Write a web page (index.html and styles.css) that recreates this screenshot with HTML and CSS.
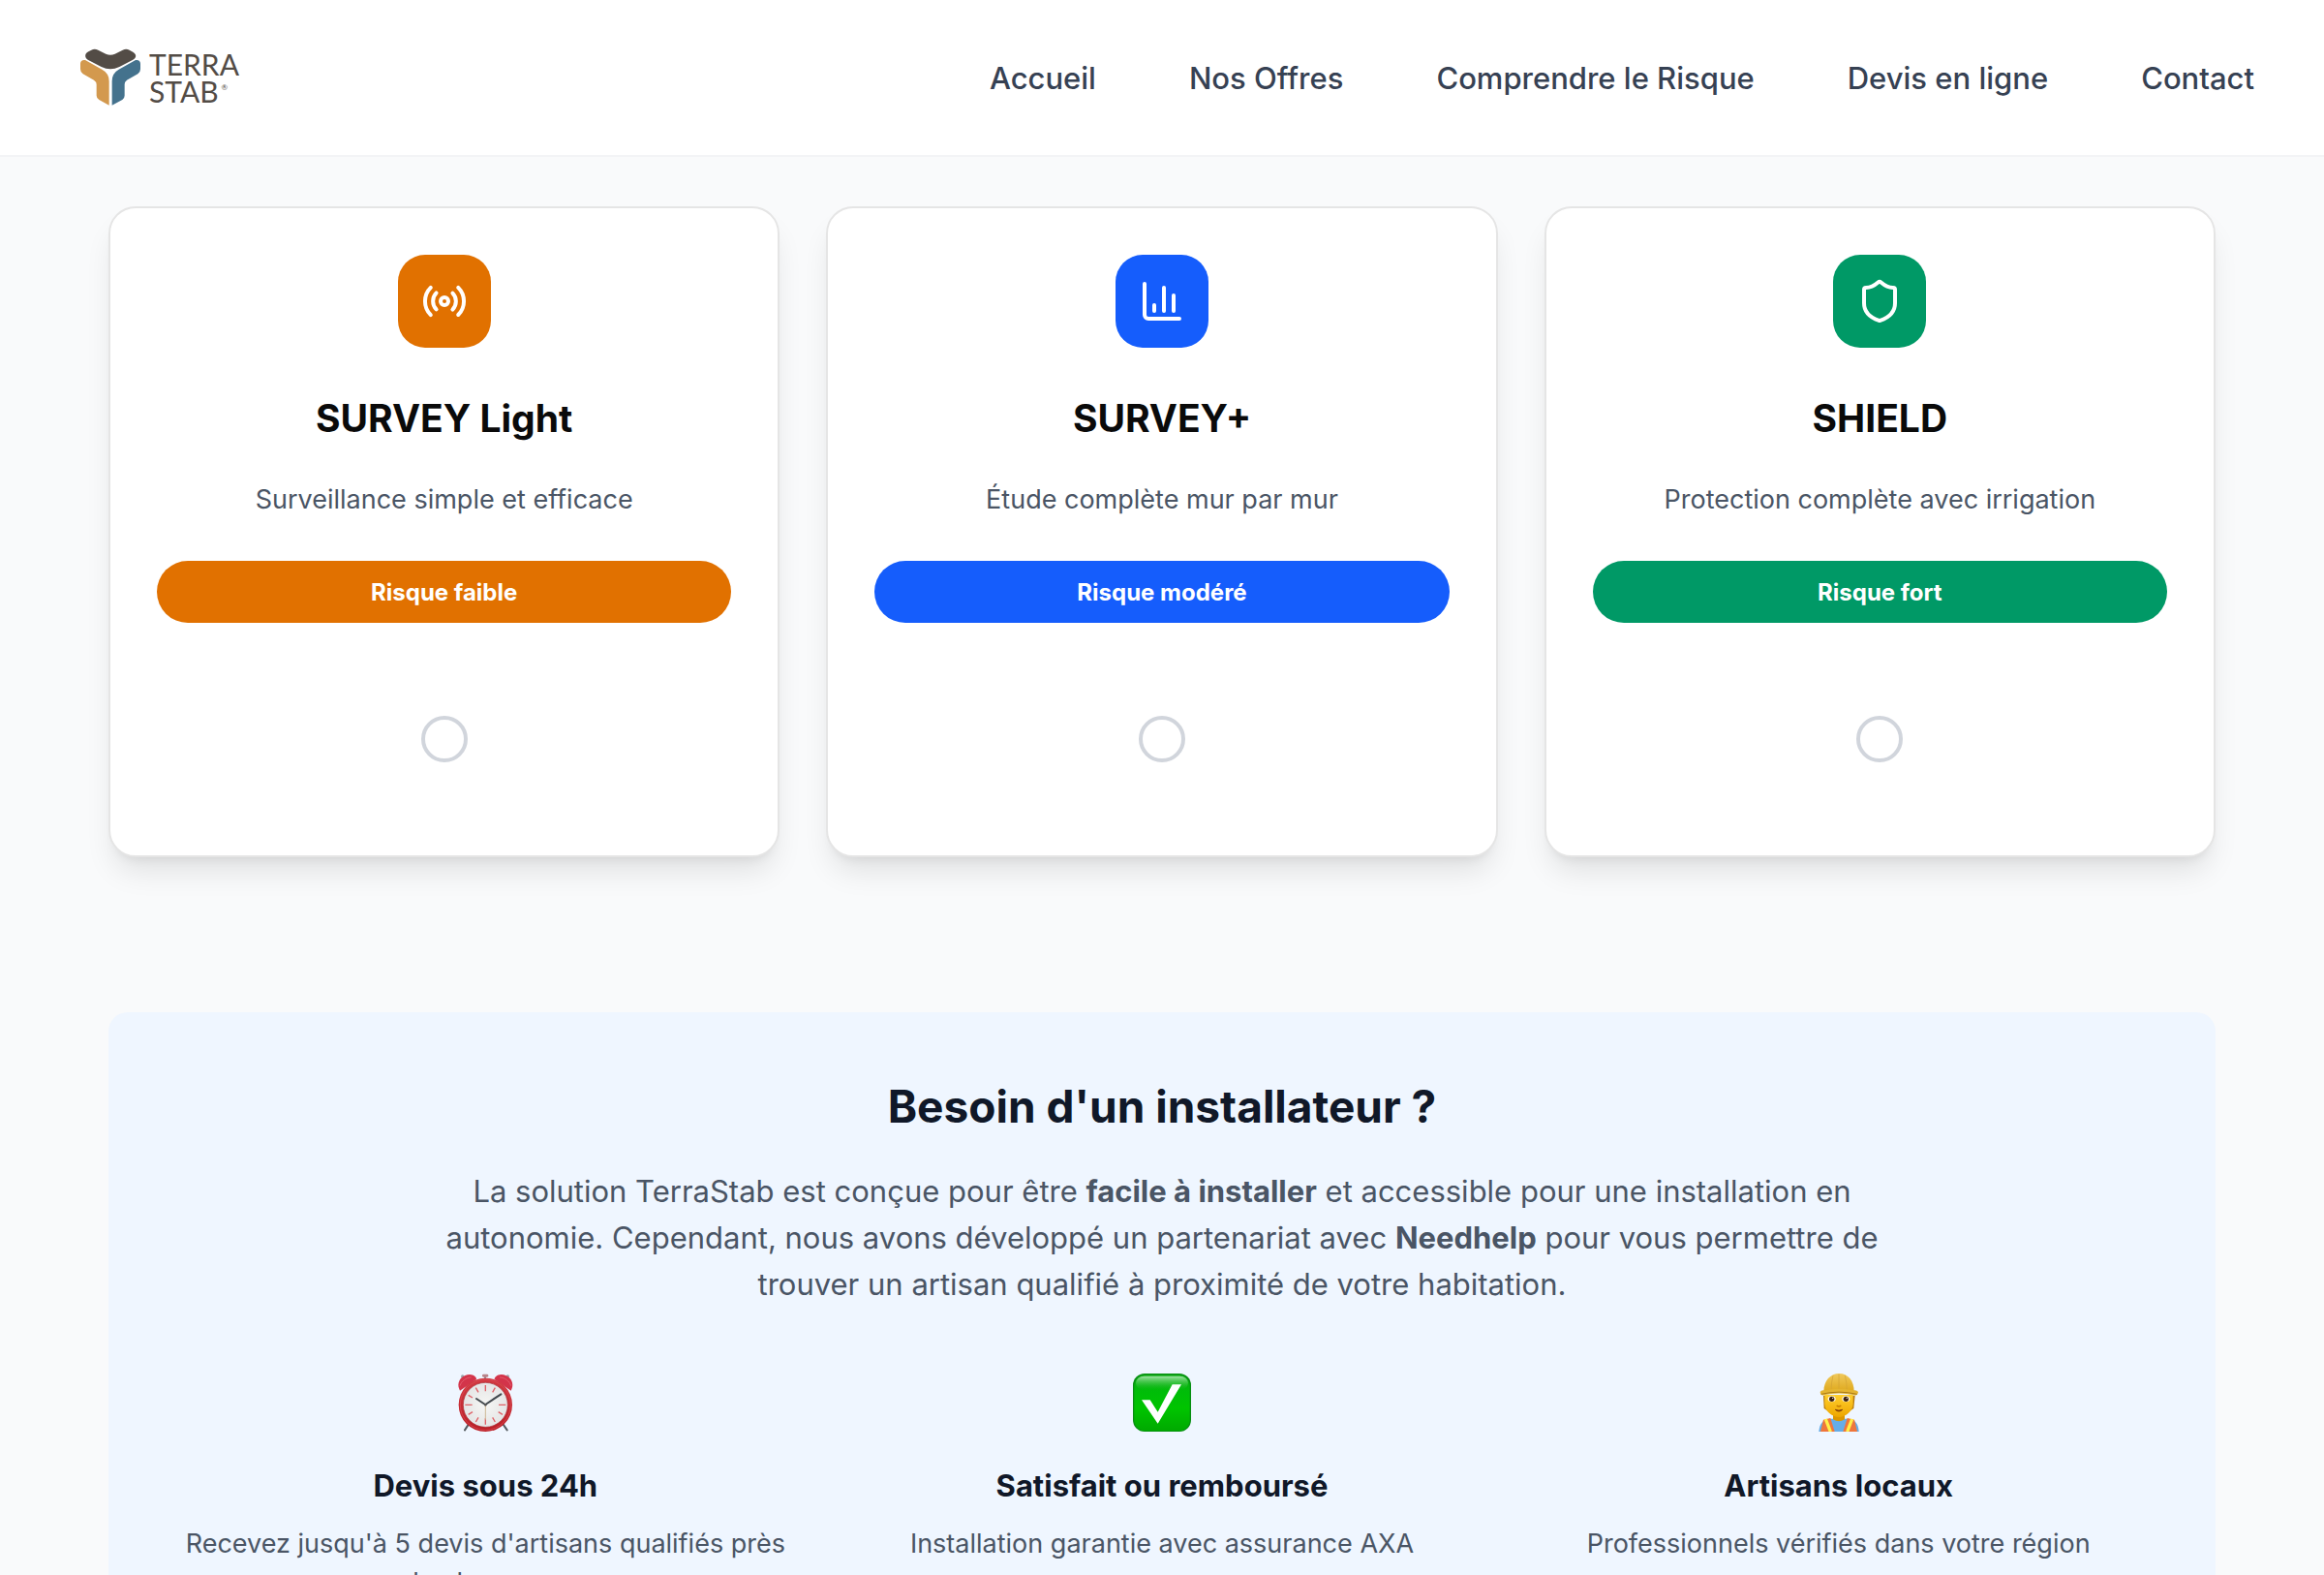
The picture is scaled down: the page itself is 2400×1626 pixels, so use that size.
FILE: index.html
```html
<!DOCTYPE html>
<html lang="fr">
<head>
<meta charset="utf-8">
<meta name="viewport" content="width=device-width, initial-scale=1">
<title>TerraStab – Nos Offres</title>
<link rel="stylesheet" href="styles.css">
</head>
<body>
<header class="site-header">
  <a class="logo" href="#">
    <svg class="logo-mark" viewBox="66 60 192 183" aria-hidden="true">
      <path fill="#534c46" d="M85 87C83 79 87 74 94 70L103 65Q113 60 124 65L148 77Q162 83 176 77L200 65Q211 60 221 65L232 71Q243 78 240 87Q238 92 232 95L190 117Q162 131 134 117L92 95Q87 92 85 87Z"/>
      <path fill="#d3994e" d="M69 107Q70 94 84 96L136 125Q158 137 158 161V236L127 219Q119 214 119 206V172Q119 163 111 158L77 139Q69 134 69 124Z"/>
      <path fill="#44728d" d="M255 107Q254 94 240 96L188 125Q167 137 167 161V236L199 219Q206 214 206 206V172Q206 163 213 158L247 139Q255 134 255 124Z"/>
    </svg>
    <span class="logo-text">TERRA<br>STAB<sup class="logo-reg">®</sup></span>
  </a>
  <nav class="nav">
    <a href="#">Accueil</a>
    <a href="#">Nos Offres</a>
    <a href="#">Comprendre le Risque</a>
    <a href="#">Devis en ligne</a>
    <a href="#">Contact</a>
  </nav>
</header>

<main class="main">
  <div class="offers">
    <article class="card card-light">
      <span class="card-icon">
        <svg class="icon" viewBox="0 0 24 24" aria-hidden="true"><path d="M4.9 19.1C1 15.2 1 8.8 4.9 4.9"/><path d="M7.8 16.2c-2.3-2.3-2.3-6.1 0-8.5"/><circle cx="12" cy="12" r="2"/><path d="M16.2 7.8c2.3 2.3 2.3 6.1 0 8.5"/><path d="M19.1 4.9C23 8.8 23 15.1 19.1 19"/></svg>
      </span>
      <h3 class="card-title" id="offer-light">SURVEY Light</h3>
      <p class="card-desc">Surveillance simple et efficace</p>
      <span class="badge">Risque faible</span>
      <input class="card-radio" type="radio" name="offer" aria-labelledby="offer-light">
    </article>
    <article class="card card-plus">
      <span class="card-icon">
        <svg class="icon" viewBox="0 0 24 24" aria-hidden="true"><path d="M3 3v16a2 2 0 0 0 2 2h16"/><path d="M18 17V9"/><path d="M13 17V5"/><path d="M8 17v-3"/></svg>
      </span>
      <h3 class="card-title" id="offer-plus">SURVEY+</h3>
      <p class="card-desc">Étude complète mur par mur</p>
      <span class="badge">Risque modéré</span>
      <input class="card-radio" type="radio" name="offer" aria-labelledby="offer-plus">
    </article>
    <article class="card card-shield">
      <span class="card-icon">
        <svg class="icon" viewBox="0 0 24 24" aria-hidden="true"><path d="M20 13c0 5-3.5 7.5-7.66 8.95a1 1 0 0 1-.67-.01C7.5 20.5 4 18 4 13V6a1 1 0 0 1 1-1c2 0 4.500-1.200 6.240-2.720a1.170 1.170 0 0 1 1.520 0C14.510 3.810 17 5 19 5a1 1 0 0 1 1 1z"/></svg>
      </span>
      <h3 class="card-title" id="offer-shield">SHIELD</h3>
      <p class="card-desc">Protection complète avec irrigation</p>
      <span class="badge">Risque fort</span>
      <input class="card-radio" type="radio" name="offer" aria-labelledby="offer-shield">
    </article>
  </div>

  <section class="installer">
    <h2 class="installer-title">Besoin d'un installateur ?</h2>
    <p class="installer-intro">La solution TerraStab est conçue pour être <strong>facile à installer</strong> et accessible pour une installation en autonomie. Cependant, nous avons développé un partenariat avec <strong>Needhelp</strong> pour vous permettre de trouver un artisan qualifié à proximité de votre habitation.</p>
    <div class="perks">
      <div class="perk">
        <svg class="perk-icon" viewBox="0 0 180 180" aria-hidden="true">
          <defs>
            <linearGradient id="rim" x1="0" y1="0" x2="0" y2="1"><stop offset="0" stop-color="#d23a42"/><stop offset="1" stop-color="#bb1f27"/></linearGradient>
            <radialGradient id="face"><stop offset="0" stop-color="#f6f6f4"/><stop offset="1" stop-color="#e5e6e6"/></radialGradient>
          </defs>
          <path d="M44 149L27 175M140 149L158 175" stroke="#555c62" stroke-width="6" stroke-linecap="round"/>
          <circle cx="20" cy="9" r="5" fill="#9aa5ab"/><circle cx="160" cy="9" r="5" fill="#9aa5ab"/>
          <path d="M90 7V22" stroke="#8a8f94" stroke-width="6"/>
          <rect x="81" y="2" width="19" height="9" rx="4" fill="#b9848a"/>
          <path d="M12 53C-2 28 16 4 42 3C56 3 64 13 63 18Z" fill="#d3344a"/>
          <path d="M170 53C184 28 166 4 140 3C126 3 118 13 119 18Z" fill="#d3344a"/>
          <path d="M12 38C16 24 31 12 47 12" fill="none" stroke="#e25a6c" stroke-width="3"/>
          <path d="M170 38C166 24 151 12 135 12" fill="none" stroke="#e25a6c" stroke-width="3"/>
          <circle cx="91" cy="97" r="83" fill="url(#rim)"/>
          <circle cx="91" cy="97" r="78" fill="none" stroke="#d9505a" stroke-width="2"/>
          <circle cx="91" cy="97" r="69" fill="url(#face)" stroke="#a63038" stroke-width="2"/>
          <path d="M91 36V55M91 139V158M28 97H50M132 97H154M61 44L69 58M121 44L113 58M38 67L51 75M38 127L51 119M144 127L131 119M61 150L69 136M121 150L113 136" stroke="#df6268" stroke-width="4"/>
          <path d="M91 97V143" stroke="#cdb896" stroke-width="3"/>
          <path d="M90 96L63 78M91 96L139 64" stroke="#42484d" stroke-width="6" stroke-linecap="round"/>
          <circle cx="91" cy="97" r="4" fill="#555"/>
        </svg>
        <h3 class="perk-title">Devis sous 24h</h3>
        <p class="perk-desc">Recevez jusqu'à 5 devis d'artisans qualifiés près de chez vous</p>
      </div>
      <div class="perk">
        <svg class="perk-icon" viewBox="0 0 180 180" aria-hidden="true">
          <defs>
            <linearGradient id="tile" x1="0" y1="0" x2="0" y2="1"><stop offset="0" stop-color="#12aa18"/><stop offset=".3" stop-color="#00bd08"/><stop offset=".6" stop-color="#00c400"/><stop offset="1" stop-color="#00a900"/></linearGradient>
            <linearGradient id="gloss" x1="0" y1="0" x2="0" y2="1"><stop offset="0" stop-color="#a1e4a5"/><stop offset="1" stop-color="#20bc28" stop-opacity="0"/></linearGradient>
          </defs>
          <rect width="180" height="180" rx="36" fill="#078e12"/>
          <rect x="4" y="4" width="172" height="174" rx="34" fill="url(#tile)"/>
          <rect x="9" y="8" width="162" height="43" rx="26" fill="url(#gloss)"/>
          <path fill="#fff" d="M27 82H53L77 119L122 34H150L77 155Z"/>
        </svg>
        <h3 class="perk-title">Satisfait ou remboursé</h3>
        <p class="perk-desc">Installation garantie avec assurance AXA</p>
      </div>
      <div class="perk">
        <svg class="perk-icon" viewBox="0 0 180 180" aria-hidden="true">
          <defs>
            <linearGradient id="skin" x1="0" y1="0" x2="0" y2="1"><stop offset="0" stop-color="#ffcf2e"/><stop offset="1" stop-color="#eda600"/></linearGradient>
            <linearGradient id="hat" x1="0" y1="0" x2="0" y2="1"><stop offset="0" stop-color="#f0c95c"/><stop offset="1" stop-color="#dfa91d"/></linearGradient>
          </defs>
          <path d="M42 68H140L136 108L124 116H56L44 108Z" fill="#b87a0c"/>
          <path d="M28 180C30 153 42 143 62 140H118C140 143 150 153 152 180Z" fill="#65ade8"/>
          <path d="M72 125H108V142Q90 154 72 142Z" fill="#dc9700"/>
          <path d="M46 66H134V94C134 116 112 135 90 135S46 116 46 94Z" fill="url(#skin)"/>
          <path d="M42 143L64 138L77 180H33Z" fill="#ef763c"/>
          <path d="M138 143L116 138L103 180H147Z" fill="#ef763c"/>
          <path d="M49 141L64 180M131 141L116 180" stroke="#fff04a" stroke-width="10"/>
          <path d="M43 56C43 22 64 0 91 0S137 22 137 56Z" fill="url(#hat)"/>
          <path d="M72 6Q66 28 66 54M109 6Q115 28 115 54M90 2V50" fill="none" stroke="#d1a135" stroke-width="2"/>
          <path d="M32 57Q35 50 46 52Q90 43 135 52Q146 50 150 57Q148 70 138 67Q90 56 43 67Q33 69 32 57Z" fill="#e4b431"/>
          <path d="M35 64Q90 51 146 64" fill="none" stroke="#aa7b18" stroke-width="3"/>
          <ellipse cx="68" cy="79" rx="12" ry="9" fill="#fff8e7"/><ellipse cx="112" cy="79" rx="12" ry="9" fill="#fff8e7"/>
          <circle cx="68" cy="79" r="8" fill="#3b2110"/><circle cx="112" cy="79" r="8" fill="#3b2110"/>
          <circle cx="71" cy="76" r="2" fill="#fff"/><circle cx="115" cy="76" r="2" fill="#fff"/>
          <path d="M83 99Q90 105 97 99" fill="none" stroke="#c77d00" stroke-width="4"/>
          <path d="M79 112Q90 117 101 112Q90 122 79 112Z" fill="#81400c" stroke="#81400c" stroke-width="3"/>
        </svg>
        <h3 class="perk-title">Artisans locaux</h3>
        <p class="perk-desc">Professionnels vérifiés dans votre région</p>
      </div>
    </div>
  </section>
</main>
</body>
</html>
```
FILE: styles.css
```css
* {
  box-sizing: border-box;
}

body {
  margin: 0;
  background: #f9fafb;
  color: #0a0a0a;
  font-family: Inter, "Liberation Sans", sans-serif;
}

h2,
h3,
p {
  margin: 0;
}

.site-header {
  display: flex;
  align-items: center;
  justify-content: space-between;
  min-height: 162px;
  padding: 0 72px 0 82px;
  background: #fff;
  border-bottom: 2px solid #f3f4f6;
}

.logo {
  display: flex;
  align-items: center;
  gap: 8px;
  color: #534c46;
  text-decoration: none;
}

.logo-mark {
  width: 64px;
  height: 61px;
}

.logo-text {
  font-family: Lato, "Liberation Sans", sans-serif;
  font-size: 30px;
  line-height: 28px;
}

.logo-reg {
  margin-left: 3px;
  font-size: 8px;
  line-height: 0;
  vertical-align: 13px;
}

.nav {
  display: flex;
  gap: 96px;
  padding-top: 2px;
}

.nav a {
  color: #364153;
  font-size: 31px;
  font-weight: 500;
  line-height: 48px;
  text-decoration: none;
}

.main {
  max-width: 2304px;
  margin: 0 auto;
  padding: 51px 64px 64px;
}

.offers {
  display: grid;
  grid-template-columns: repeat(3, 1fr);
  gap: 48px;
}

.card {
  display: flex;
  flex-direction: column;
  align-items: center;
  padding: 48px 48px 96px;
  background: #fff;
  border: 2px solid #e5e5e5;
  border-radius: 28px;
  box-shadow: 0 20px 30px -6px rgb(0 0 0 / 10%), 0 8px 12px -8px rgb(0 0 0 / 10%);
  text-align: center;
}

.card-light {
  --accent: #e17100;
}

.card-plus {
  --accent: #155dfc;
}

.card-shield {
  --accent: #009966;
}

.card-icon {
  display: grid;
  place-items: center;
  width: 96px;
  height: 96px;
  border-radius: 28px;
  background: var(--accent);
}

.icon {
  width: 48px;
  height: 48px;
  fill: none;
  stroke: #fff;
  stroke-width: 2;
  stroke-linecap: round;
  stroke-linejoin: round;
}

.card-title {
  margin-top: 49px;
  font-size: 39px;
  font-weight: 700;
  line-height: 48px;
}

.card-desc {
  margin-top: 40px;
  color: #4a5565;
  font-size: 27px;
  line-height: 40px;
}

.badge {
  align-self: stretch;
  margin-top: 43px;
  padding-top: 2px;
  border-radius: 32px;
  background: var(--accent);
  color: #fff;
  font-size: 24px;
  font-weight: 700;
  line-height: 62px;
}

.card-radio {
  appearance: none;
  width: 48px;
  height: 48px;
  margin: 96px 0 0;
  border: 4px solid #d1d5dc;
  border-radius: 50%;
}

.card-radio:checked {
  border-color: var(--accent);
  background: var(--accent);
}

.installer {
  margin-top: 160px;
  padding: 65px 64px 64px;
  border-radius: 20px;
  background: #eff6ff;
  text-align: center;
}

.installer-title {
  color: #101828;
  font-size: 46px;
  font-weight: 700;
  line-height: 64px;
}

.installer-intro {
  max-width: 1536px;
  margin: 32px auto 0;
  color: #4a5565;
  font-size: 31px;
  line-height: 48px;
}

.perks {
  display: grid;
  grid-template-columns: repeat(3, 1fr);
  gap: 48px;
  margin-top: 68px;
}

.perk-icon {
  display: block;
  width: 60px;
  height: 60px;
  margin: 0 auto 32px;
}

.perk-title {
  color: #101828;
  font-size: 31px;
  font-weight: 700;
  line-height: 48px;
}

.perk-desc {
  margin-top: 16px;
  color: #4a5565;
  font-size: 27px;
  line-height: 40px;
}
```
